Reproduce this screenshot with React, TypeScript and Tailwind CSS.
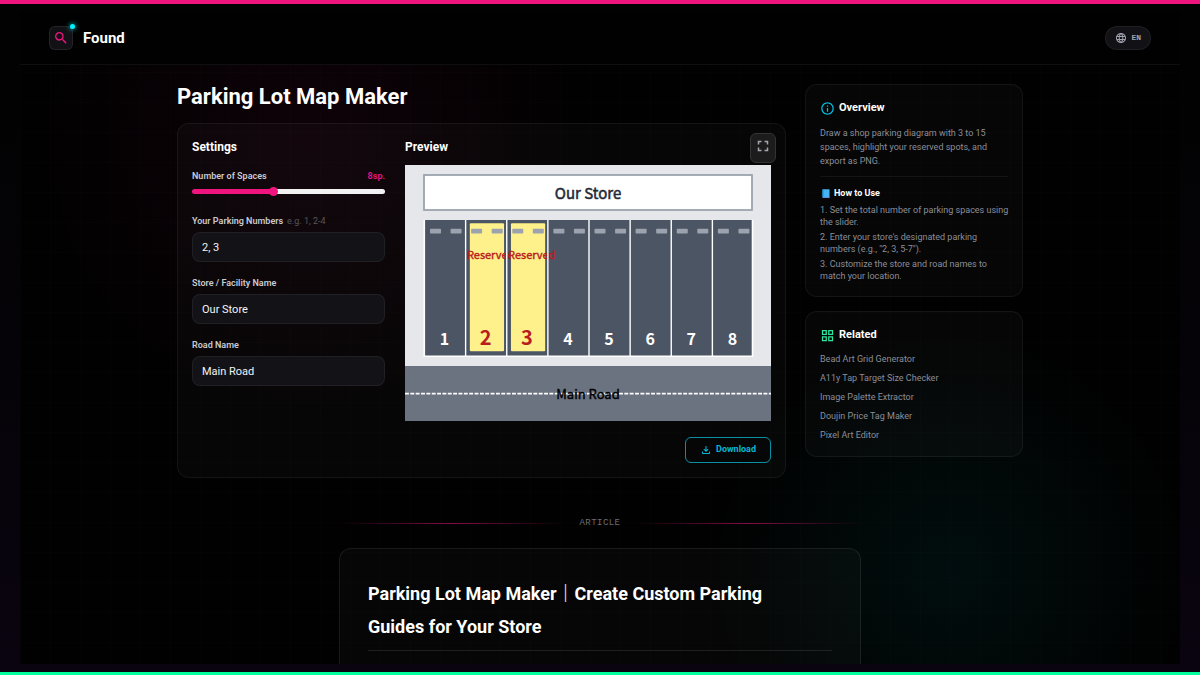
import { useState } from "react";
import type { CSSProperties, ReactNode } from "react";
import {
  MdFullscreen,
  MdLanguage,
  MdOutlineFileDownload,
  MdOutlineGridView,
  MdOutlineInfo,
  MdSearch,
} from "react-icons/md";

const MIN_SPACES = 3;
const MAX_SPACES = 15;

const steps = [
  "1. Set the total number of parking spaces using the slider.",
  "2. Enter your store's designated parking numbers (e.g., \"2, 3, 5-7\").",
  "3. Customize the store and road names to match your location.",
];

const related = [
  "Bead Art Grid Generator",
  "A11y Tap Target Size Checker",
  "Image Palette Extractor",
  "Doujin Price Tag Maker",
  "Pixel Art Editor",
];

function parseNumbers(text: string): Set<number> {
  const result = new Set<number>();
  for (const part of text.split(",")) {
    const [from, to] = part.split("-").map((n) => parseInt(n, 10));
    if (Number.isNaN(from)) continue;
    const last = Number.isNaN(to) || to === undefined ? from : Math.min(to, MAX_SPACES);
    for (let n = from; n <= last; n++) result.add(n);
  }
  return result;
}

function ParkingMap({
  count,
  reserved,
  store,
  road,
}: {
  count: number;
  reserved: Set<number>;
  store: string;
  road: string;
}) {
  const left = 19;
  const width = 329;
  const pitch = width / count;
  const spaces = Array.from({ length: count }, (_, i) => i);
  return (
    <svg
      viewBox="0 0 366 256"
      role="img"
      aria-label="Parking lot map"
      className="block w-full font-['Noto_Sans_CJK_JP',sans-serif]"
    >
      <rect width="366" height="256" fill="#e5e7eb" />
      <rect x="19" y="10" width="328" height="35" fill="#ffffff" stroke="#9ca3af" strokeWidth="1.8" />
      <text x="183" y="33.5" textAnchor="middle" fontSize="15" fill="#1f2937" stroke="#1f2937" strokeWidth="0.5">
        {store}
      </text>
      <rect x={left} y="55" width={width} height="136" fill="#4b5563" />
      {spaces.map((i) => {
        const x = left + i * pitch;
        const mine = reserved.has(i + 1);
        return (
          <g key={i}>
            {mine && (
              <>
                <rect x={x + 4.7} y="58.3" width={pitch - 6.9} height="128" rx="1" fill="#fef08a" />
                <text x={x + 1.8} y="94" fontSize="11" fill="#b91c1c" stroke="#b91c1c" strokeWidth="0.4">
                  Reserved
                </text>
              </>
            )}
            <text
              x={x + pitch / 2}
              y="180"
              textAnchor="middle"
              fontSize={mine ? 20 : 16}
              fontWeight="700"
              fill={mine ? "#b91c1c" : "#ffffff"}
            >
              {i + 1}
            </text>
            <rect x={x + 6} y="63.7" width="11" height="4.8" rx="0.8" fill="#9ca3af" />
            <rect x={x + 6 + pitch / 2} y="63.7" width="11" height="4.8" rx="0.8" fill="#9ca3af" />
          </g>
        );
      })}
      {spaces.slice(1).map((i) => (
        <path key={i} d={`M${left + i * pitch + 0.5} 55V191`} stroke="#ffffff" strokeWidth="1.4" />
      ))}
      <path d="M19.3 55V191.2H347.5V55" fill="none" stroke="#ffffff" strokeWidth="1.6" />
      <rect y="201" width="366" height="55" fill="#6b7280" />
      <path d="M0 228.7H366" stroke="#ffffff" strokeWidth="1.8" strokeDasharray="3.9 1.45" />
      <text x="183" y="234.4" textAnchor="middle" fontSize="13" fill="#000000" stroke="#000000" strokeWidth="0.4">
        {road}
      </text>
    </svg>
  );
}

function Field({
  id,
  label,
  hint,
  value,
  onChange,
}: {
  id: string;
  label: string;
  hint?: string;
  value: string;
  onChange: (value: string) => void;
}) {
  return (
    <div>
      <label htmlFor={id} className="block text-[9px] leading-[14px] font-semibold text-[#c8cad0]">
        {label}
        {hint && <span className="ml-1 font-normal text-[#55565e]">{hint}</span>}
      </label>
      <input
        id={id}
        type="text"
        value={value}
        onChange={(e) => onChange(e.target.value)}
        className="mt-1 block h-[30px] w-full rounded-lg border border-white/6 bg-[#131317] px-[9px] text-[11px] text-[#f4f4f6] outline-none focus:border-[#f0147f]"
      />
    </div>
  );
}

function Card({ children }: { children: ReactNode }) {
  return <section className="rounded-xl border border-white/6 bg-white/[0.025] p-3.5">{children}</section>;
}

export default function App() {
  const [count, setCount] = useState(8);
  const [numbers, setNumbers] = useState("2, 3");
  const [store, setStore] = useState("Our Store");
  const [road, setRoad] = useState("Main Road");

  const fill = ((count - MIN_SPACES) / (MAX_SPACES - MIN_SPACES)) * 100;
  const trackStyle: CSSProperties = {
    backgroundImage: `linear-gradient(to right, #f0147f ${fill}%, #f1f1f1 ${fill}%)`,
  };

  return (
    <div className="flex h-screen flex-col border-t-4 border-b-3 border-t-[#f0147f] border-b-[#00ff9d] bg-linear-to-b from-[#020202] to-[#0a0410] px-5 py-2 font-['Roboto','Noto_Sans_CJK_JP',sans-serif] text-white">
      <div className="min-h-0 flex-1 overflow-y-auto bg-[#010101] bg-[radial-gradient(circle_at_290px_130px,rgba(240,20,127,0.055),transparent_290px),radial-gradient(circle_at_930px_560px,rgba(0,210,220,0.06),transparent_240px)] [scrollbar-width:none]">
        <div className="bg-[linear-gradient(to_right,rgba(255,255,255,0.009)_1px,transparent_1px),linear-gradient(to_bottom,rgba(255,255,255,0.009)_1px,transparent_1px)] bg-size-[30px_30px]">
          <header className="flex h-[53px] items-center justify-between border-b border-white/6 bg-[#010101]/90 px-[29px]">
            <a href="#" className="flex items-center gap-2.5">
              <span className="relative flex size-6 items-center justify-center rounded-md border border-white/8 bg-[#121216]">
                <MdSearch className="size-4 shrink-0 text-[#f0147f]" />
                <span className="absolute -top-[3px] -right-[3px] size-[5px] rounded-full bg-[#00f0ff] shadow-[0_0_5px_#00f0ff]" />
              </span>
              <span className="text-[15px] leading-5 font-bold">Found</span>
            </a>
            <button
              type="button"
              className="flex h-6 items-center gap-1 rounded-full border border-white/6 bg-[#121216] px-[9px] text-[#a0a3ad]"
            >
              <MdLanguage className="size-3" />
              <span className="font-['Liberation_Mono',monospace] text-[8px] font-bold">EN</span>
            </button>
          </header>

          <main className="mx-auto grid max-w-[846px] grid-cols-[minmax(0,1fr)_218px] items-start gap-[19px] pt-[19px]">
            <div>
              <h1 className="mb-[13px] text-[22px] leading-[26px] font-bold">Parking Lot Map Maker</h1>
              <div className="relative">
                <Card>
                  <div className="grid grid-cols-[193px_minmax(0,1fr)] gap-5">
                    <div>
                      <h2 className="mb-[13px] text-[12px] leading-[18px] font-bold">Settings</h2>
                      <div className="flex flex-col gap-3.5">
                        <div>
                          <div className="flex justify-between text-[9px] leading-[14px] font-semibold">
                            <label htmlFor="spaces" className="text-[#c8cad0]">
                              Number of Spaces
                            </label>
                            <output htmlFor="spaces" className="text-[#f0147f]">
                              {count}sp.
                            </output>
                          </div>
                          <input
                            id="spaces"
                            type="range"
                            min={MIN_SPACES}
                            max={MAX_SPACES}
                            value={count}
                            onChange={(e) => setCount(Number(e.target.value))}
                            style={trackStyle}
                            className="mt-1.5 mb-1.5 block h-[5px] w-full cursor-pointer appearance-none rounded-sm [&::-webkit-slider-thumb]:size-[9px] [&::-webkit-slider-thumb]:appearance-none [&::-webkit-slider-thumb]:rounded-full [&::-webkit-slider-thumb]:bg-[#f0147f]"
                          />
                        </div>
                        <Field
                          id="numbers"
                          label="Your Parking Numbers"
                          hint="e.g. 1, 2-4"
                          value={numbers}
                          onChange={setNumbers}
                        />
                        <Field id="store" label="Store / Facility Name" value={store} onChange={setStore} />
                        <Field id="road" label="Road Name" value={road} onChange={setRoad} />
                      </div>
                    </div>
                    <div>
                      <h2 className="mb-[9px] text-[12px] leading-[18px] font-bold">Preview</h2>
                      <ParkingMap count={count} reserved={parseNumbers(numbers)} store={store} road={road} />
                      <div className="mt-4 flex justify-end">
                        <button
                          type="button"
                          className="flex h-[26px] items-center gap-1 rounded-md border border-[#0891a5] px-3.5 text-[9px] font-bold text-[#06b6d4]"
                        >
                          <MdOutlineFileDownload className="size-3" />
                          Download
                        </button>
                      </div>
                    </div>
                  </div>
                </Card>
                <button
                  type="button"
                  aria-label="Fullscreen"
                  className="absolute top-2.5 right-2.5 flex h-[30px] w-[26px] items-center justify-center rounded-md border border-[#333333] bg-[#1c1c1c] pb-1 text-[#a3a6ae]"
                >
                  <MdFullscreen className="size-[18px] shrink-0" />
                </button>
              </div>
            </div>

            <aside className="flex flex-col gap-3.5">
              <Card>
                <h2 className="flex items-center gap-1 text-[11px] leading-[18px] font-bold">
                  <MdOutlineInfo className="size-[15px] text-[#00bfe6]" />
                  Overview
                </h2>
                <p className="mt-[9px] border-b border-white/6 pb-2 text-[9px] leading-[14px] text-[#8b8e99]">
                  Draw a shop parking diagram with 3 to 15 spaces, highlight your reserved spots, and export as PNG.
                </p>
                <h3 className="mt-[9px] flex items-center gap-1 pl-0.5 text-[9px] leading-[14px] font-bold">
                  <svg viewBox="0 0 8 9" className="h-[9px] w-2" aria-hidden="true">
                    <rect x="0.5" y="0.3" width="7" height="8.4" rx="0.5" fill="#42b4f5" />
                    <path d="M0.5 0.5H1.6V8.6H0.5Z" fill="#2196d9" />
                    <path d="M1 7.8H7.5V8.7H1Z" fill="#7f8ff0" />
                  </svg>
                  How to Use
                </h3>
                <ol className="mt-1 -mr-1 flex flex-col gap-[3px] text-[9px] leading-3 text-[#8b8e99]">
                  {steps.map((step) => (
                    <li key={step}>{step}</li>
                  ))}
                </ol>
              </Card>
              <Card>
                <h2 className="flex items-center gap-1 text-[11px] leading-[18px] font-bold">
                  <MdOutlineGridView className="size-[15px] text-[#2ee6a0]" />
                  Related
                </h2>
                <ul className="mt-[9px] flex flex-col gap-1.5 text-[9px] leading-[13px] text-[#8b8e99]">
                  {related.map((name) => (
                    <li key={name}>
                      <a href="#">{name}</a>
                    </li>
                  ))}
                </ul>
              </Card>
            </aside>
          </main>

          <div className="mx-auto mt-[39px] max-w-[522px]">
            <div className="flex items-center gap-4">
              <span className="h-px flex-1 bg-[linear-gradient(to_right,transparent,rgba(240,20,127,0.55),transparent)]" />
              <span className="font-['Liberation_Mono',monospace] text-[9px] leading-3 tracking-wider text-[#6b6d76]">
                ARTICLE
              </span>
              <span className="h-px flex-1 bg-[linear-gradient(to_right,transparent,rgba(240,20,127,0.55),transparent)]" />
            </div>
            <article className="mt-[19px] rounded-t-xl border border-b-0 border-white/8 bg-white/[0.025] px-7 pt-7 pb-8">
              <h2 className="border-b border-white/10 pb-[7px] text-[18px] leading-[33px] font-bold">
                Parking Lot Map Maker｜Create Custom Parking
                <br />
                Guides for Your Store
              </h2>
            </article>
          </div>
        </div>
      </div>
    </div>
  );
}
